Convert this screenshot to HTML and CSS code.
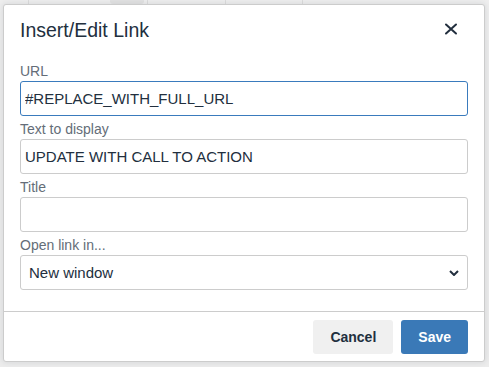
FILE: index.html
```html
<!DOCTYPE html>
<html lang="en">
<head>
    <meta charset="UTF-8">
    <meta name="viewport" content="width=device-width, initial-scale=1.0">
    <title>Insert/Edit Link</title>
    <link rel="stylesheet" href="styles.css">
</head>
<body>
    <div class="page">
        <div class="editor-toolbar">
            <span class="tb-group g1"></span>
            <span class="tb-group g2"><span class="tb-btn"></span></span>
            <span class="tb-group g3"></span>
            <span class="tb-group g4"></span>
        </div>

        <div class="dialog">
            <div class="dialog-header">
                <h1>Insert/Edit Link</h1>
                <button class="close-btn" aria-label="Close">
                    <svg width="14" height="14" viewBox="0 0 14 14">
                        <path d="M2 2.5 L12 11.5 M12 2.5 L2 11.5" stroke="#222f3e" stroke-width="2" stroke-linecap="round"/>
                    </svg>
                </button>
            </div>

            <div class="dialog-body">
                <div class="form-group">
                    <label for="url">URL</label>
                    <input id="url" class="focused" type="text" value="#REPLACE_WITH_FULL_URL">
                </div>
                <div class="form-group">
                    <label for="text">Text to display</label>
                    <input id="text" type="text" value="UPDATE WITH CALL TO ACTION">
                </div>
                <div class="form-group">
                    <label for="title">Title</label>
                    <input id="title" type="text" value="">
                </div>
                <div class="form-group">
                    <label for="target">Open link in...</label>
                    <div class="select-wrap">
                        <select id="target">
                            <option>New window</option>
                            <option>Current window</option>
                        </select>
                        <svg class="chevron" width="10" height="6" viewBox="0 0 10 6">
                            <path d="M1 1 L5 5 L9 1" fill="none" stroke="#222f3e" stroke-width="2"/>
                        </svg>
                    </div>
                </div>
            </div>

            <div class="dialog-footer">
                <button class="btn btn-secondary">Cancel</button>
                <button class="btn btn-primary">Save</button>
            </div>
        </div>
    </div>
</body>
</html>
```

FILE: styles.css
```css
* {
    box-sizing: border-box;
}

body {
    margin: 0;
    background: #ececec;
    font-family: "Liberation Sans", Arial, sans-serif;
    color: #222f3e;
}

.page {
    position: relative;
    width: 489px;
    height: 367px;
    overflow: hidden;
}

.editor-toolbar {
    display: flex;
    height: 40px;
    background: #eeeeee;
}

.tb-group {
    border-right: 1px solid #dcdcdc;
}

.g1 { width: 29px; }
.g2 { width: 119px; padding-left: 81px; }
.g3 { width: 78px; }
.g4 { width: 77px; }

.tb-btn {
    display: block;
    width: 34px;
    height: 28px;
    margin-top: -24px;
    background: #e2e2e2;
    border-radius: 3px;
}

.dialog {
    position: absolute;
    top: 4px;
    left: 3px;
    width: 482px;
    height: 358px;
    background: #fff;
    border: 1px solid #cccccc;
    border-radius: 3px;
    box-shadow: 0 0 6px rgba(34, 47, 62, 0.12);
    display: flex;
    flex-direction: column;
}

.dialog-header {
    display: flex;
    align-items: center;
    justify-content: space-between;
    padding: 12px 16px 0 16px;
}

.dialog-header h1 {
    margin: 0;
    font-size: 19.5px;
    font-weight: normal;
    line-height: 26px;
}

.close-btn {
    background: none;
    border: none;
    padding: 0;
    margin-right: 10px;
    margin-top: -3px;
    width: 14px;
    height: 14px;
    display: flex;
}

.dialog-body {
    padding: 19px 16px 21px 16px;
}

.form-group {
    display: flex;
    flex-direction: column;
    margin-top: 4px;
}

.form-group:first-child {
    margin-top: 0;
}

label {
    font-size: 14px;
    line-height: 18px;
    margin-bottom: 1px;
    color: #646d78;
}

input, select {
    width: 100%;
    height: 35px;
    padding: 0 4px;
    border: 1px solid #cccccc;
    border-radius: 3px;
    background: #fff;
    font-family: "Liberation Sans", Arial, sans-serif;
    font-size: 15px;
    color: #222f3e;
    outline: none;
}

input.focused {
    border-color: #3a7bbd;
}

.select-wrap {
    position: relative;
}

select {
    appearance: none;
    -webkit-appearance: none;
    padding-left: 8px;
}

.chevron {
    position: absolute;
    right: 9px;
    top: 15px;
    pointer-events: none;
}

.dialog-footer {
    display: flex;
    justify-content: flex-end;
    gap: 8px;
    padding: 8px 16px;
    border-top: 1px solid #cccccc;
}

.btn {
    height: 34px;
    border: none;
    border-radius: 3px;
    font-family: "Liberation Sans", Arial, sans-serif;
    font-size: 14px;
    font-weight: bold;
    padding: 0 17px;
    cursor: pointer;
}

.btn-secondary {
    background: #f0f0f0;
    color: #222f3e;
}

.btn-primary {
    background: #3a79b7;
    color: #fff;
}
```
